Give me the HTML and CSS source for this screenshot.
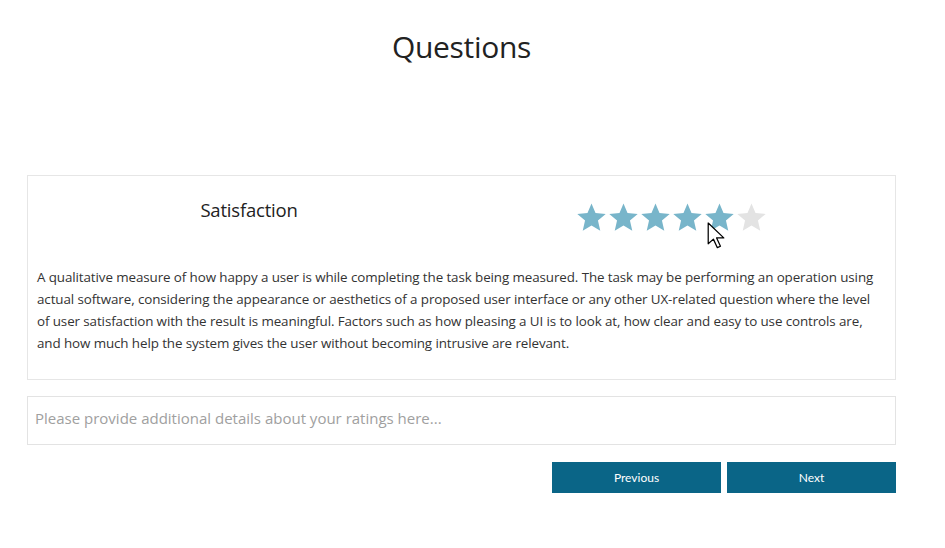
FILE: index.html
```html
<!DOCTYPE html>
<html>
<head>
<meta charset="utf-8">
<link rel="stylesheet" href="styles.css">
</head>
<body>
<div class="page">
  <h1 class="title">Questions</h1>
  <div class="card">
    <div class="card-head">
      <div class="col"><h2 class="q-name">Satisfaction</h2></div>
      <div class="col">
        <div class="stars">
          <svg class="star on" viewBox="0 0 24 24"><path d="M12 1.2l3.1 7.3 7.9.7-6 5.2 1.8 7.8L12 18.1l-6.8 4.1L7 14.4 1 9.2l7.9-.7z"/></svg>
          <svg class="star on" viewBox="0 0 24 24"><path d="M12 1.2l3.1 7.3 7.9.7-6 5.2 1.8 7.8L12 18.1l-6.8 4.1L7 14.4 1 9.2l7.9-.7z"/></svg>
          <svg class="star on" viewBox="0 0 24 24"><path d="M12 1.2l3.1 7.3 7.9.7-6 5.2 1.8 7.8L12 18.1l-6.8 4.1L7 14.4 1 9.2l7.9-.7z"/></svg>
          <svg class="star on" viewBox="0 0 24 24"><path d="M12 1.2l3.1 7.3 7.9.7-6 5.2 1.8 7.8L12 18.1l-6.8 4.1L7 14.4 1 9.2l7.9-.7z"/></svg>
          <svg class="star on" viewBox="0 0 24 24"><path d="M12 1.2l3.1 7.3 7.9.7-6 5.2 1.8 7.8L12 18.1l-6.8 4.1L7 14.4 1 9.2l7.9-.7z"/></svg>
          <svg class="star off" viewBox="0 0 24 24"><path d="M12 1.2l3.1 7.3 7.9.7-6 5.2 1.8 7.8L12 18.1l-6.8 4.1L7 14.4 1 9.2l7.9-.7z"/></svg>
          <svg class="cursor" viewBox="0 0 17 26"><path d="M1 1v20l5-4.5 3.8 8.2 3-1.4-3.7-8H16z" fill="#fff" stroke="#000" stroke-width="1.2" stroke-linejoin="round"/></svg>
        </div>
      </div>
    </div>
    <p class="desc">A qualitative measure of how happy a user is while completing the task being measured. The task may be performing an operation using actual software, considering the appearance or aesthetics of a proposed user interface or any other UX-related question where the level of user satisfaction with the result is meaningful. Factors such as how pleasing a UI is to look at, how clear and easy to use controls are, and how much help the system gives the user without becoming intrusive are relevant.</p>
  </div>
  <textarea class="details" placeholder="Please provide additional details about your ratings here..."></textarea>
  <div class="actions">
    <button class="btn">Previous</button>
    <button class="btn">Next</button>
  </div>
</div>
</body>
</html>
```

FILE: styles.css
```css
html, body {
  margin: 0;
  padding: 0;
  background: #fff;
}
body {
  font-family: "Open Sans", "Noto Sans", sans-serif;
  color: #333;
}
.page {
  width: 869px;
  margin: 0 0 0 27px;
  padding-top: 27px;
}
.title {
  margin: 0;
  font-weight: 400;
  font-size: 30px;
  line-height: 40px;
  color: #222;
  text-align: center;
  letter-spacing: -0.3px;
}
.card {
  margin-top: 108px;
  border: 1px solid #e6e6e6;
  padding: 18px 10px 25px 9px;
}
.card-head {
  display: flex;
}
.col {
  flex: 1;
  display: flex;
  justify-content: center;
}
.q-name {
  margin: 4px 0 0 0;
  font-size: 18.5px;
  font-weight: 400;
  line-height: 24px;
  color: #222;
  letter-spacing: -0.2px;
}
.stars {
  position: relative;
  display: flex;
  gap: 1px;
  margin-left: -4px;
  margin-top: 8px;
}
.star {
  width: 31px;
  height: 31px;
}
.star.on { fill: #78b5ca; }
.star.off { fill: #e3e3e3; }
.cursor {
  position: absolute;
  left: 131px;
  top: 20px;
  width: 18px;
  height: 27px;
}
.desc {
  margin: 33px 0 0 0;
  font-size: 13.4px;
  line-height: 22px;
  color: #333;
  letter-spacing: -0.1px;
}
.details {
  display: block;
  box-sizing: border-box;
  width: 869px;
  height: 49px;
  margin-top: 16px;
  border: 1px solid #e3e3e3;
  padding: 11px 7px;
  font-family: "Open Sans", "Noto Sans", sans-serif;
  font-size: 15px;
  resize: none;
  outline: none;
}
.details::placeholder {
  color: #a0a0a0;
}
.actions {
  display: flex;
  justify-content: flex-end;
  gap: 6px;
  margin-top: 17px;
}
.btn {
  width: 169px;
  height: 31px;
  border: none;
  background: #0a6587;
  color: #fff;
  font-family: Lato, sans-serif;
  font-size: 12px;
  cursor: pointer;
}
```
